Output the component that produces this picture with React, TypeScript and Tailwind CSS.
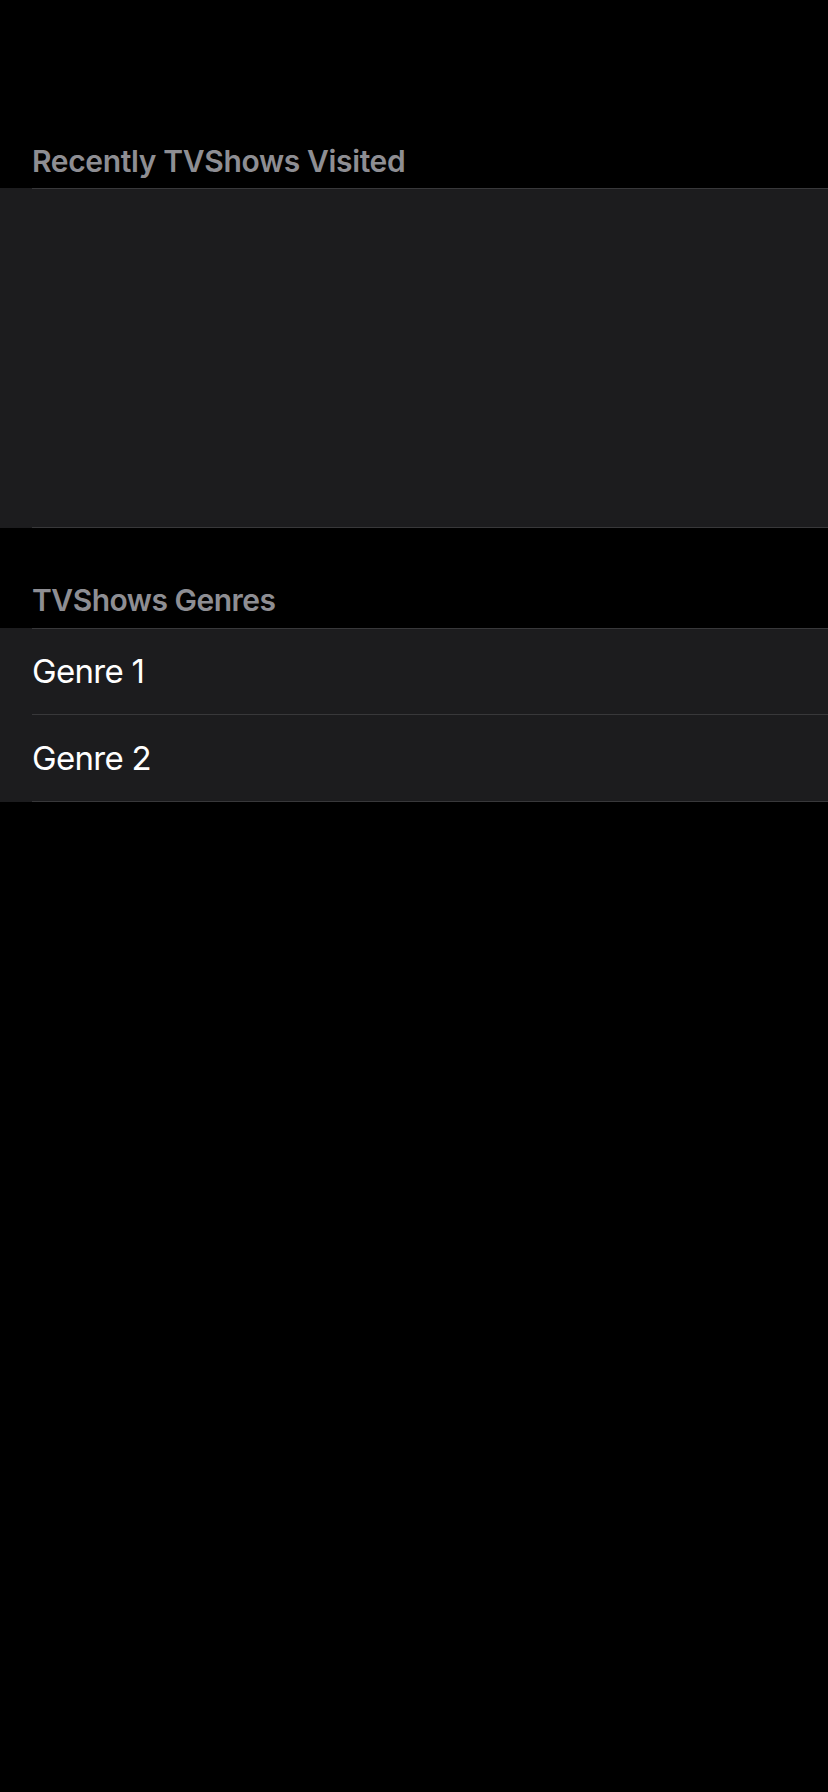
import React from "react";

export default function App() {
  const genres = ["Genre 1", "Genre 2"];
  return (
    <div
      className="min-h-[1792px] w-full bg-black"
      style={{ fontFamily: "Inter, 'Noto Sans', 'Liberation Sans', sans-serif" }}
    >
      <div className="pl-8 pt-[143px] pb-[9px]">
        <h2 className="text-[30px] leading-[36px] font-semibold text-[#8e8e93] tracking-[-0.35px]">
          Recently TVShows Visited
        </h2>
      </div>
      <div className="bg-[#1c1c1e]">
        <div className="ml-8 h-[340px] border-t border-b border-[#38383a]" />
      </div>

      <div className="pl-8 pt-[54px] pb-[10px]">
        <h2 className="text-[30px] leading-[36px] font-semibold text-[#8e8e93] tracking-[-0.5px]">
          TVShows Genres
        </h2>
      </div>
      <div className="bg-[#1c1c1e]">
        <div className="ml-8 border-t border-[#38383a]">
          {genres.map((g, i) => (
            <div
              key={g}
              className={`flex items-center border-b border-[#38383a] ${i === 0 ? "h-[86px]" : "h-[87px]"}`}
            >
              <span className="text-[33px] leading-[41px] text-white tracking-[-0.7px]">{g}</span>
            </div>
          ))}
        </div>
      </div>
    </div>
  );
}
